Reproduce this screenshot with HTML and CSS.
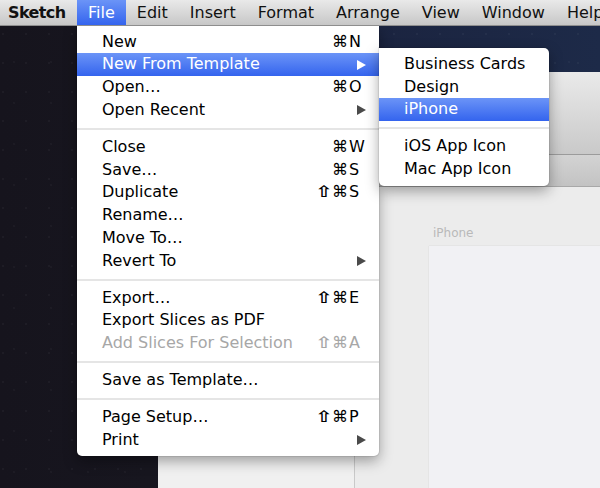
FILE: index.html
```html
<!DOCTYPE html>
<html>
<head>
<meta charset="utf-8">
<title>Sketch – File menu</title>
<link rel="stylesheet" href="styles.css">
</head>
<body>
<div class="desktop">
  <header class="menubar">
    <span class="mb-item mb-app">Sketch</span>
    <span class="mb-item active">File</span>
    <span class="mb-item">Edit</span>
    <span class="mb-item">Insert</span>
    <span class="mb-item">Format</span>
    <span class="mb-item">Arrange</span>
    <span class="mb-item">View</span>
    <span class="mb-item">Window</span>
    <span class="mb-item">Help</span>
  </header>

  <div class="window">
    <div class="toolbar"></div>
    <div class="subbar"></div>
    <div class="wbody">
      <div class="sidebar"></div>
      <div class="canvas">
        <div class="artboard-label">iPhone</div>
        <div class="artboard"></div>
      </div>
    </div>
  </div>

  <div class="menu file-menu">
    <div class="item"><span class="label">New</span><span class="sc"><span class="mods">⌘</span><span class="key">N</span></span></div>
    <div class="item hl"><span class="label">New From Template</span><span class="arrow"></span></div>
    <div class="item"><span class="label">Open…</span><span class="sc"><span class="mods">⌘</span><span class="key">O</span></span></div>
    <div class="item"><span class="label">Open Recent</span><span class="arrow"></span></div>
    <div class="sep"></div>
    <div class="item"><span class="label">Close</span><span class="sc"><span class="mods">⌘</span><span class="key">W</span></span></div>
    <div class="item"><span class="label">Save…</span><span class="sc"><span class="mods">⌘</span><span class="key">S</span></span></div>
    <div class="item"><span class="label">Duplicate</span><span class="sc"><span class="mods"><span class="shift">⇧</span>⌘</span><span class="key">S</span></span></div>
    <div class="item"><span class="label">Rename…</span></div>
    <div class="item"><span class="label">Move To…</span></div>
    <div class="item"><span class="label">Revert To</span><span class="arrow"></span></div>
    <div class="sep"></div>
    <div class="item"><span class="label">Export…</span><span class="sc"><span class="mods"><span class="shift">⇧</span>⌘</span><span class="key">E</span></span></div>
    <div class="item"><span class="label">Export Slices as PDF</span></div>
    <div class="item disabled"><span class="label">Add Slices For Selection</span><span class="sc"><span class="mods"><span class="shift">⇧</span>⌘</span><span class="key">A</span></span></div>
    <div class="sep"></div>
    <div class="item"><span class="label">Save as Template…</span></div>
    <div class="sep"></div>
    <div class="item"><span class="label">Page Setup…</span><span class="sc"><span class="mods"><span class="shift">⇧</span>⌘</span><span class="key">P</span></span></div>
    <div class="item"><span class="label">Print</span><span class="arrow"></span></div>
  </div>

  <div class="menu submenu">
    <div class="item"><span class="label">Business Cards</span></div>
    <div class="item"><span class="label">Design</span></div>
    <div class="item hl"><span class="label">iPhone</span></div>
    <div class="sep"></div>
    <div class="item"><span class="label">iOS App Icon</span></div>
    <div class="item"><span class="label">Mac App Icon</span></div>
  </div>
</div>
</body>
</html>
```

FILE: styles.css
```css
html, body {
  margin: 0;
  padding: 0;
}

body {
  width: 600px;
  height: 488px;
  overflow: hidden;
  font-family: "DejaVu Sans", "Liberation Sans", sans-serif;
}

.desktop {
  position: relative;
  width: 600px;
  height: 488px;
  overflow: hidden;
  background-color: #18161f;
  background-image:
    radial-gradient(circle at 3px 5px, rgba(255,255,255,0.06) 0.5px, transparent 1px),
    radial-gradient(circle at 14px 21px, rgba(255,255,255,0.05) 0.5px, transparent 1px),
    linear-gradient(90deg, #16141d 0%, #17161f 25%, #1b2440 62%, #1d2a48 100%);
  background-size: 23px 29px, 37px 41px, 100% 100%;
}

/* ---------- menu bar ---------- */
.menubar {
  position: relative;
  z-index: 3;
  display: flex;
  height: 25px;
  border-bottom: 1px solid #8e8e8e;
  background: linear-gradient(#e9e9e9, #c7c7c7);
  font-size: 16px;
  line-height: 26px;
  color: #111;
  white-space: nowrap;
  overflow: hidden;
}

.mb-item {
  flex-shrink: 0;
  padding: 0 11px;
}

.mb-app {
  width: 69px;
  padding: 0 0 0 8px;
  font-weight: bold;
  letter-spacing: -0.6px;
}

.mb-item.active {
  background: linear-gradient(#6b94f7, #3464ee);
  color: #fff;
}

/* ---------- window behind ---------- */
.window {
  position: absolute;
  left: 158px;
  top: 72px;
  right: 0;
  bottom: 0;
  display: flex;
  flex-direction: column;
  background: #ececec;
  border-top-left-radius: 5px;
  overflow: hidden;
}

.toolbar {
  flex-shrink: 0;
  height: 82px;
  background: linear-gradient(#eaeaea, #c9c9c9);
  border-bottom: 1px solid #9b9b9b;
}

.subbar {
  flex-shrink: 0;
  height: 31px;
  background: linear-gradient(#d3d3d3, #c3c3c3);
  border-bottom: 1px solid #a8a8a8;
}

.wbody {
  flex: 1;
  min-height: 0;
  display: flex;
}

.sidebar {
  flex-shrink: 0;
  width: 196px;
  background: #f0f0f0;
  border-right: 1px solid #c9c9c9;
}

.canvas {
  flex: 1;
  padding: 39px 0 0 74px;
  background: #ececec;
  overflow: hidden;
}

.artboard-label {
  padding-left: 4px;
  margin-bottom: 6px;
  font-size: 12px;
  line-height: 14px;
  color: #b9b9b9;
}

.artboard {
  width: 400px;
  height: 300px;
  background: #f1f1f4;
  box-shadow: 0 0 1px rgba(0,0,0,0.18);
}

/* ---------- menus ---------- */
.menu {
  position: absolute;
  background: #fff;
  color: #000;
  font-size: 16px;
  box-shadow: 0 5px 14px rgba(0,0,0,0.35), 0 0 0 1px rgba(0,0,0,0.07);
  white-space: nowrap;
}

.file-menu {
  z-index: 2;
  left: 77px;
  top: 26px;
  width: 302px;
  padding: 4.6px 0 4.6px;
  border-radius: 0 0 5px 5px;
}

.submenu {
  z-index: 4;
  left: 379px;
  top: 48px;
  width: 170px;
  padding: 4.8px 0 5.2px;
  border-radius: 0 5px 5px 5px;
}

.item {
  display: flex;
  align-items: center;
  height: 22.8px;
  padding: 0 13px 0 25px;
  line-height: 22.8px;
}

.label {
  flex: 1;
}

.sc {
  display: flex;
}

.mods {
  text-align: right;
}

.shift {
  display: inline-block;
  margin-right: 2px;
  transform: scaleX(1.3);
  font-weight: bold;
}

.key {
  width: 17px;
  padding-left: 1px;
}

.arrow {
  width: 0;
  height: 0;
  border-left: 9px solid #4a4a4a;
  border-top: 5px solid transparent;
  border-bottom: 5px solid transparent;
}

.item.hl {
  background: linear-gradient(#6b94f7, #3464ee);
  color: #fff;
}

.item.hl .arrow {
  border-left-color: #fff;
}

.item.disabled {
  color: #a7a7a7;
}

.sep {
  height: 2px;
  margin: 6px 0;
  background: #e5e5e5;
}
```
